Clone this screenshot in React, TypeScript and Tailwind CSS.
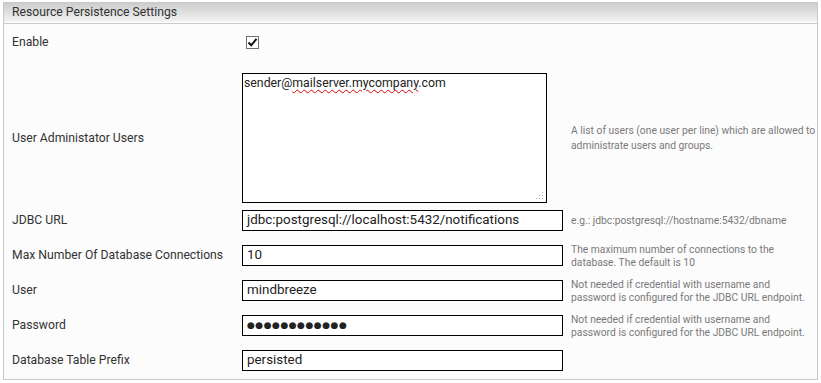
import React from "react";

const Help = ({ children }: { children: React.ReactNode }) => (
  <div className="text-[10.3px] leading-[13px] text-[#7a7a7a] pl-[8px]">{children}</div>
);

const Field = ({ children }: { children: React.ReactNode }) => (
  <div className="w-[321px] h-[21px] border border-black bg-white flex items-center pl-[4px] text-[13.4px] text-[#222] whitespace-nowrap overflow-hidden" style={{ fontFamily: 'Roboto, "Noto Sans", sans-serif' }}>
    {children}
  </div>
);

const Row = ({ label, children, help }: { label: string; children: React.ReactNode; help?: React.ReactNode }) => (
  <div className="grid grid-cols-[238px_321px_1fr] items-center h-[35px]">
    <div className="pl-[8px]">{label}</div>
    {children}
    {help ? <Help>{help}</Help> : <div />}
  </div>
);

export default function App() {
  return (
    <div className="w-[821px] h-[383px] bg-white pt-[2px] px-[3px]" style={{ fontFamily: 'Roboto, "Noto Sans", sans-serif' }}>
      <div className="w-[815px] h-[378px] border border-[#c9c9c9] bg-[#fcfcfc] text-[12.2px] text-[#333]">
        <div className="h-[20px] bg-gradient-to-b from-[#cdcdcd] to-[#f3f3f3] border-b border-white flex items-center pl-[8px] text-[#333]">
          Resource Persistence Settings
        </div>
        <div className="border-t border-[#c9c9c9]" />
        <div className="grid grid-cols-[238px_1fr] items-center h-[36px]">
          <div className="pl-[8px]">Enable</div>
          <div className="pl-[4px]">
            <div className="w-[13px] h-[13px] border border-[#6f6f6f] bg-white flex items-center justify-center">
              <svg width="11" height="11" viewBox="0 0 11 11">
                <path d="M1.5 5.5 L4.2 8.3 L9.5 1.8" stroke="#111" strokeWidth="2" fill="none" />
              </svg>
            </div>
          </div>
        </div>
        <div className="grid grid-cols-[238px_305px_1fr] items-center pt-[13px] pb-[0px]">
          <div className="pl-[8px]">User Administator Users</div>
          <div className="relative w-[305px] h-[130px] border border-black bg-white pl-[1px] pt-[1px] text-[12.3px] text-[#222] leading-[16px]" style={{ fontFamily: 'Roboto, "Noto Sans", sans-serif' }}>
            sender@<span className="underline decoration-wavy decoration-[#d00] decoration-1 underline-offset-[2px]">mailserver.mycompany</span>.com
            <svg className="absolute right-[2px] bottom-[2px]" width="8" height="8" viewBox="0 0 8 8">
              <rect x="6" y="0" width="1" height="1" fill="#aaa" />
              <rect x="3" y="3" width="1" height="1" fill="#aaa" />
              <rect x="6" y="3" width="1" height="1" fill="#aaa" />
              <rect x="0" y="6" width="1" height="1" fill="#aaa" />
              <rect x="3" y="6" width="1" height="1" fill="#aaa" />
              <rect x="6" y="6" width="1" height="1" fill="#aaa" />
            </svg>
          </div>
          <div className="pl-[24px] text-[10.3px] leading-[15px] text-[#7a7a7a]">
            A list of users (one user per line) which are allowed to administrate users and groups.
          </div>
        </div>
        <Row label="JDBC URL" help="e.g.: jdbc:postgresql://hostname:5432/dbname">
          <Field>jdbc:postgresql://localhost:5432/notifications</Field>
        </Row>
        <Row label="Max Number Of Database Connections" help={<>The maximum number of connections to the<br />database. The default is 10</>}>
          <Field>10</Field>
        </Row>
        <Row label="User" help={<>Not needed if credential with username and<br />password is configured for the JDBC URL endpoint.</>}>
          <Field>mindbreeze</Field>
        </Row>
        <Row label="Password" help={<>Not needed if credential with username and<br />password is configured for the JDBC URL endpoint.</>}>
          <Field>
            <span className="text-[9px] tracking-[0.5px]" style={{ fontFamily: '"DejaVu Sans", sans-serif' }}>●●●●●●●●●●●●</span>
          </Field>
        </Row>
        <Row label="Database Table Prefix">
          <Field>persisted</Field>
        </Row>
      </div>
    </div>
  );
}
